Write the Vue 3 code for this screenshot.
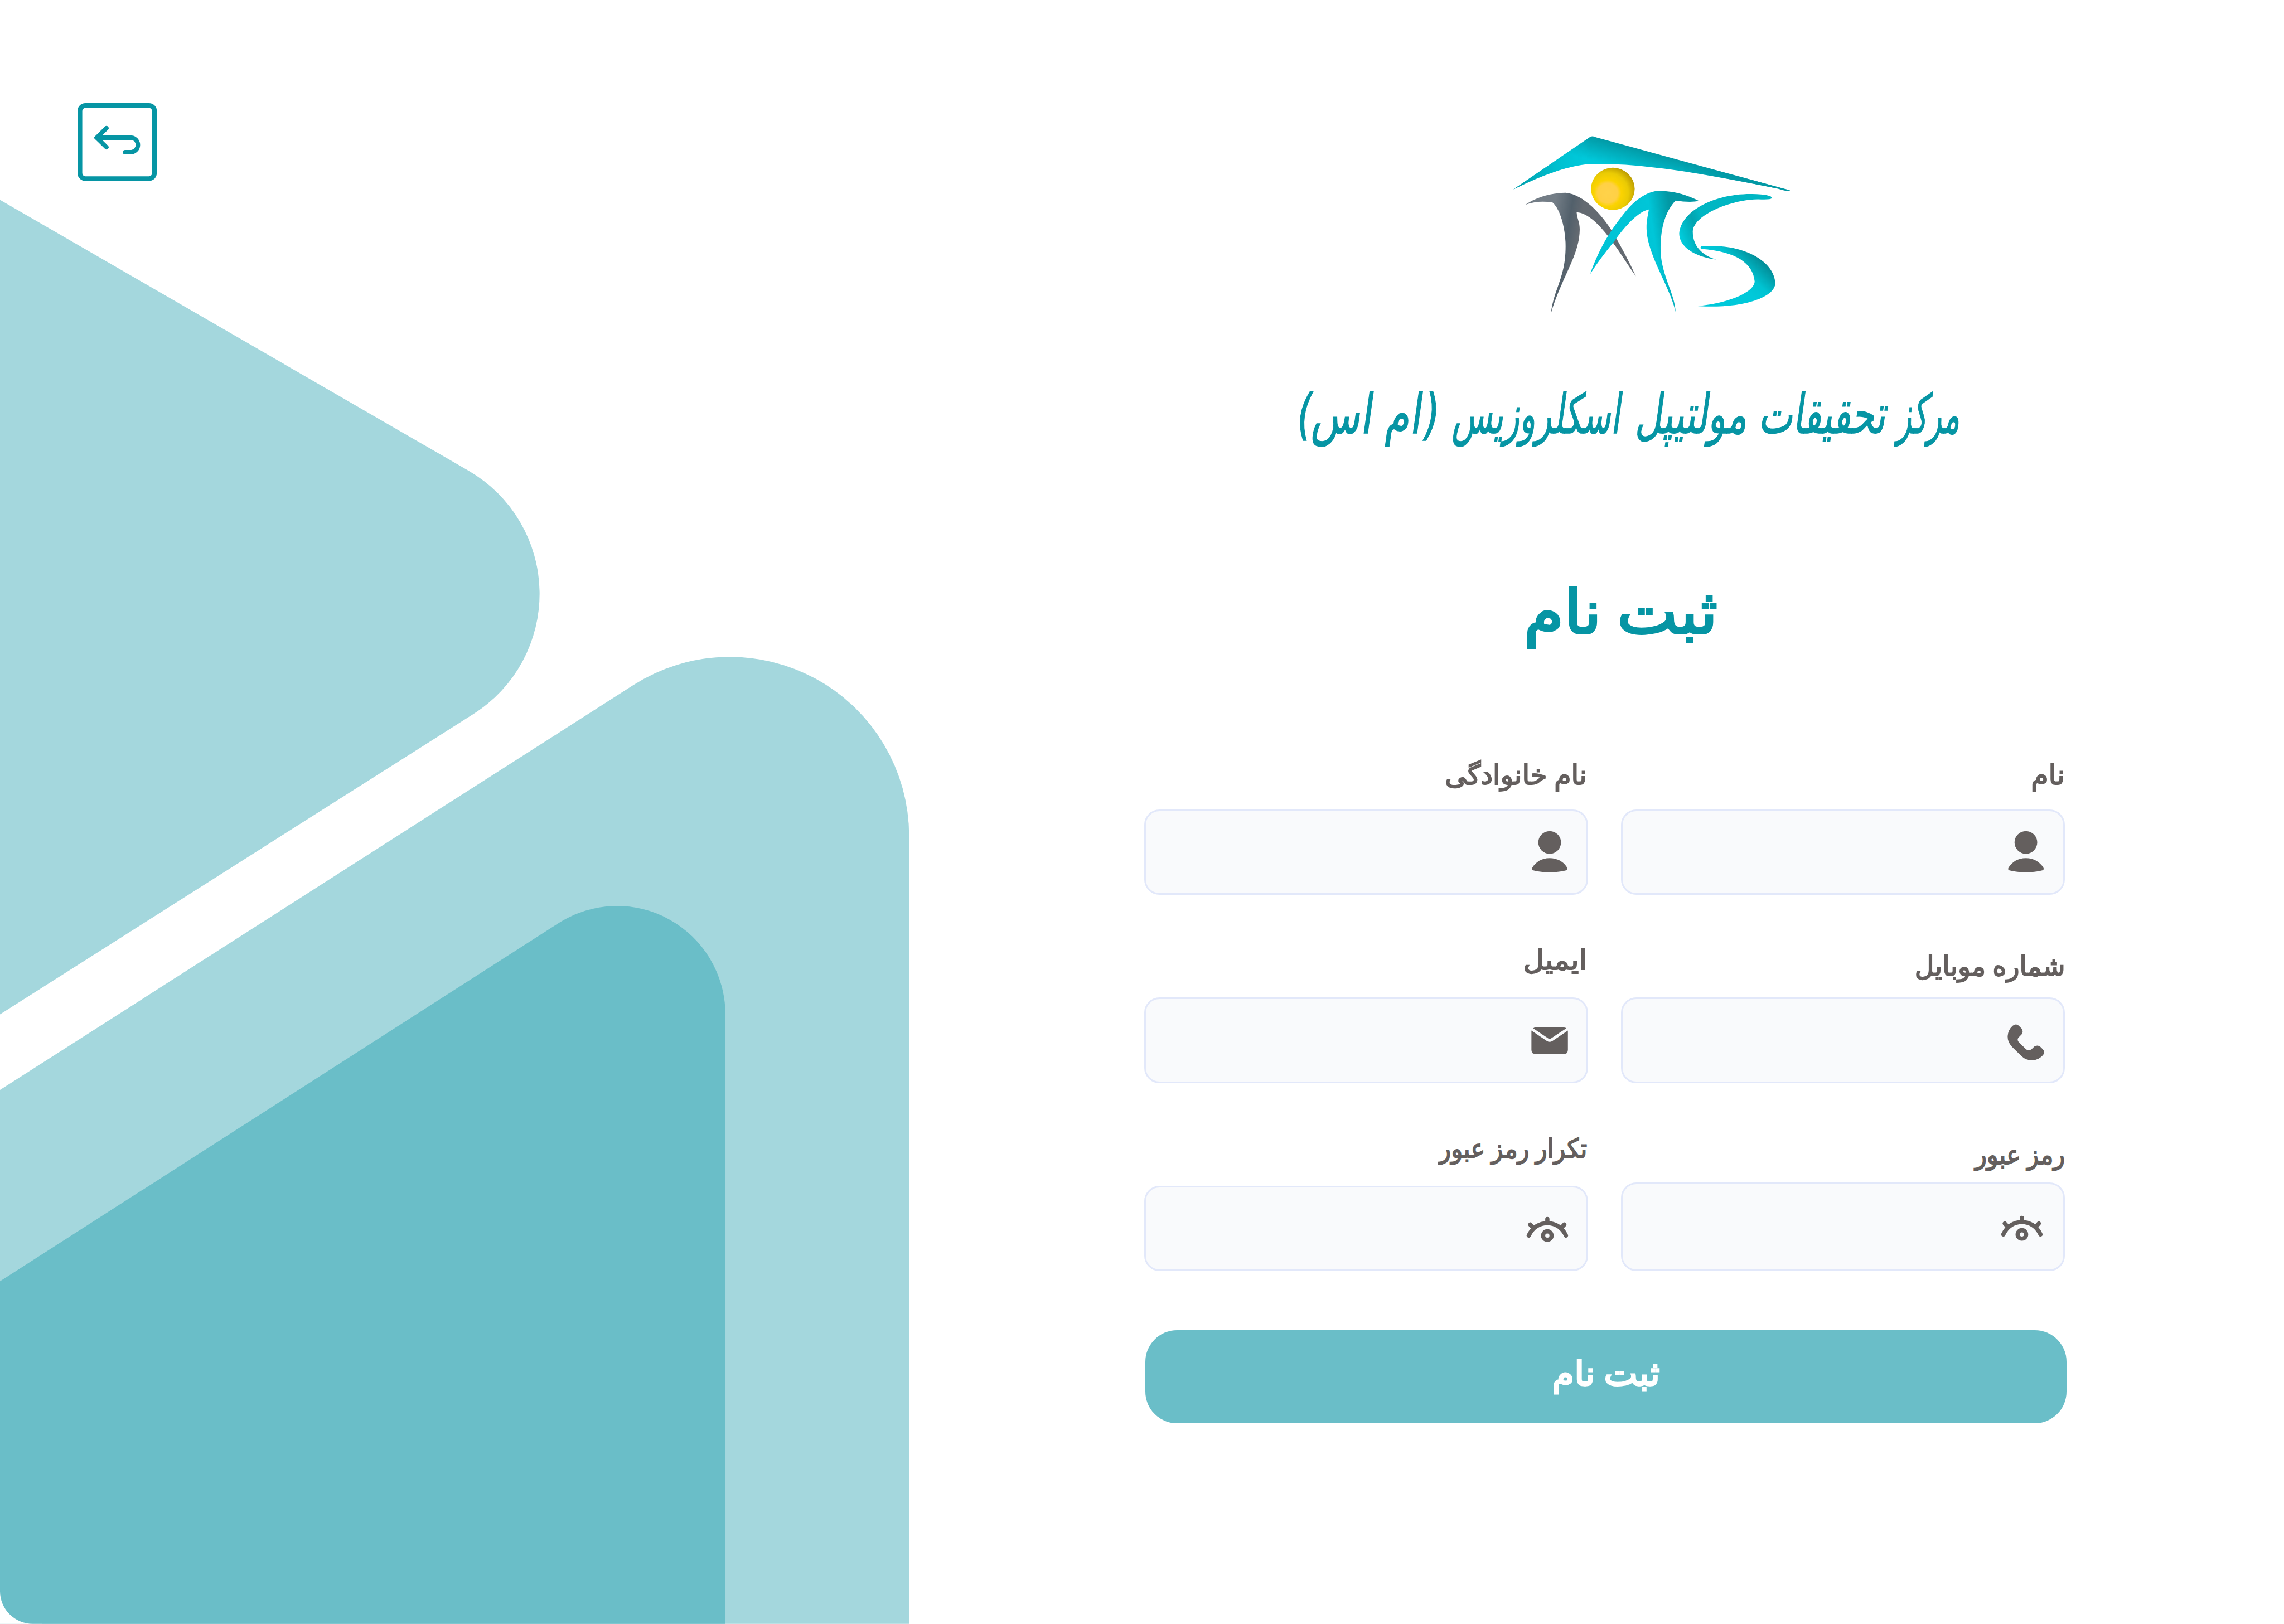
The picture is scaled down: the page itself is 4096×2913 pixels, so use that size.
<script setup>
import { nextTick } from 'vue'

// Stretches a line of text horizontally to the given width.
const vFit = {
  mounted(el, { value }) {
    nextTick(() => {
      el.style.transform = `scaleX(${value / el.offsetWidth})`
    })
  },
}

const columns = [
  {
    id: 'left',
    fields: [
      { id: 'last-name', label: 'نام خانوادگی', width: 269, icon: 'user' },
      { id: 'email', label: 'ایمیل', width: 121, icon: 'mail' },
      { id: 'repeat-password', label: 'تکرار رمز عبور', width: 280, icon: 'eye' },
    ],
  },
  {
    id: 'right',
    fields: [
      { id: 'first-name', label: 'نام', width: 64, icon: 'user' },
      { id: 'mobile', label: 'شماره موبایل', width: 284, icon: 'phone' },
      { id: 'password', label: 'رمز عبور', width: 170, icon: 'eye' },
    ],
  },
]

const boxes = {
  user: '637 447 240 252',
  mail: '637 438 240 252',
  phone: '637 447 240 252',
  eye: '624 490 240 252',
}

const words = [
  { text: 'مرکز', x: 3706, w: 118 },
  { text: 'تحقیقات', x: 3566, w: 240 },
  { text: 'مولتیپل', x: 3304, w: 212 },
  { text: 'اسکلروزیس', x: 3064, w: 318 },
  { text: '(ام اس)', x: 2717, w: 268 },
]
</script>

<template>
  <main class="page">
    <svg class="art" viewBox="0 0 1800 3072" aria-hidden="true">
      <path fill="#a4d7dd" d="M0 378 L887 891 A269 269 0 0 1 895 1351 L0 1919Z" />
      <path fill="#a4d7dd" d="M0 2062 L1198 1296 A339 339 0 0 1 1719.500 1581 V3072 H0Z" />
      <path fill="#fff" d="M0 2990 H80 V3072 H0Z" />
      <path fill="#6abec8" d="M0 2424 L1057 1746 A205 205 0 0 1 1372 1918 V3072 H62 A62 62 0 0 1 0 3010Z" />
    </svg>

    <aside class="side">
      <a class="back" href="#" aria-label="بازگشت">
        <svg viewBox="81 75 450 442" fill="none" stroke="#0695a4">
          <rect x="94.500" y="88.500" width="423" height="415" rx="31" stroke-width="27" />
          <path stroke-width="25" stroke-linecap="round" d="M245 217 L190 271 L245 325 M190 271 H387 A41.500 41.500 0 0 1 387 353.500 H351" />
        </svg>
      </a>
    </aside>

    <section class="panel">
      <svg class="logo" viewBox="0 0 1568 1140" preserveAspectRatio="none" aria-hidden="true">
        <defs>
          <linearGradient id="roof" gradientUnits="userSpaceOnUse" x1="640" y1="120" x2="600" y2="250">
            <stop offset="0" stop-color="#0298a4" /><stop offset="1" stop-color="#00c8da" />
          </linearGradient>
          <linearGradient id="roofEnds" gradientUnits="userSpaceOnUse" x1="110" y1="0" x2="1480" y2="0">
            <stop offset="0" stop-color="#0298a4" /><stop offset=".16" stop-color="#00bccb" stop-opacity=".7" />
            <stop offset=".28" stop-color="#00c8da" stop-opacity="0" />
            <stop offset=".6" stop-color="#0298a4" stop-opacity="0" /><stop offset=".85" stop-color="#0298a4" />
          </linearGradient>
          <radialGradient id="sun" cx=".38" cy=".6" r=".68">
            <stop offset="0" stop-color="#ffd24a" /><stop offset=".34" stop-color="#ffd045" />
            <stop offset=".46" stop-color="#fbd300" /><stop offset=".7" stop-color="#eacb04" /><stop offset="1" stop-color="#b59500" />
          </radialGradient>
          <linearGradient id="grey" gradientUnits="userSpaceOnUse" x1="310" y1="500" x2="450" y2="520">
            <stop offset="0" stop-color="#737d86" /><stop offset=".6" stop-color="#52606b" /><stop offset="1" stop-color="#646a71" />
          </linearGradient>
          <linearGradient id="tee" gradientUnits="userSpaceOnUse" x1="740" y1="560" x2="890" y2="540">
            <stop offset="0" stop-color="#00c4d6" /><stop offset=".35" stop-color="#00c6d8" /><stop offset="1" stop-color="#0298a4" />
          </linearGradient>
          <linearGradient id="essTop" gradientUnits="userSpaceOnUse" x1="930" y1="640" x2="1060" y2="600">
            <stop offset="0" stop-color="#00cddd" /><stop offset=".65" stop-color="#02a4b0" /><stop offset="1" stop-color="#00b6c3" />
          </linearGradient>
          <linearGradient id="essLow" gradientUnits="userSpaceOnUse" x1="1270" y1="960" x2="1390" y2="850">
            <stop offset="0" stop-color="#00c9da" /><stop offset=".4" stop-color="#00c3d2" /><stop offset="1" stop-color="#028f9a" />
          </linearGradient>
        </defs>
        <path fill="url(#roof)" d="M110 382 L490 84 Q503 77 518 86 L1478 388 Q1460 394 1420 378 Q1000 280 800 257 Q640 234 480 238 Q330 255 110 382Z" />
        <path fill="url(#roofEnds)" d="M110 382 L490 84 Q503 77 518 86 L1478 388 Q1460 394 1420 378 Q1000 280 800 257 Q640 234 480 238 Q330 255 110 382Z" />
        <ellipse cx="602" cy="379" rx="108" ry="120" fill="url(#sun)" />
        <path fill="url(#grey)" d="M168 470 Q250 405 368 401 C460 410 550 530 600 622 Q670 760 716 876 C670 800 625 715 580 650 C540 590 480 515 423 512 C425 550 440 570 438 615 C436 760 345 890 296 1085 C310 940 374 880 368 680 C362 560 330 480 303 456 Q230 442 168 470Z" />
        <path fill="url(#tee)" d="M490 862 C540 700 600 600 662 512 C710 440 780 385 840 390 Q940 395 1028 448 Q980 458 912 445 C860 510 836 600 838 740 C846 880 910 980 912 1078 C890 960 810 820 780 690 C760 600 770 560 780 496 C720 510 650 610 608 678 Q535 780 490 862Z" />
        <path fill="url(#essTop)" d="M1388 432 Q1380 442 1320 438 C1180 440 1000 530 997 620 C996 700 1040 755 1112 780 C1010 765 930 710 930 632 C940 500 1110 405 1290 408 Q1390 410 1388 432Z" />
        <path fill="url(#essLow)" d="M1040 706 C1230 685 1400 780 1405 915 C1400 1010 1200 1060 1022 1044 C1160 1030 1300 970 1303 905 C1295 800 1210 735 1040 720 Q1030 712 1040 706Z" />
      </svg>

      <svg class="wordmark" viewBox="2430 620 1300 310" role="img">
        <g transform="translate(0 818) skewX(-8)">
          <text v-for="w in words" :key="w.text" :x="w.x" y="0" :textLength="w.w" lengthAdjust="spacingAndGlyphs">{{ w.text }}</text>
        </g>
      </svg>

      <h1 class="title"><span v-fit="366">ثبت نام</span></h1>

      <form class="form" @submit.prevent>
        <div class="columns">
          <div v-for="col in columns" :key="col.id" class="column" :class="col.id">
            <div v-for="f in col.fields" :key="f.id" class="field" :class="[f.id, f.icon]">
              <label class="label"><span v-fit="f.width">{{ f.label }}</span></label>
              <div class="input">
                <svg class="icon" :viewBox="boxes[f.icon]" fill="#645f5e">
                  <template v-if="f.icon === 'user'">
                    <circle cx="757.500" cy="520" r="64.500" />
                    <path d="M658 665 C677 631 712 609 757.500 609 C803 609 838 631 858 665 Q860 675 853 678 Q805 690 757.500 690 Q710 690 662 678 Q655 675 658 665Z" />
                  </template>
                  <template v-else-if="f.icon === 'mail'">
                    <path d="M664 493 Q670 489 677 489 H838 Q846 489 852 493 L765 551 Q757.500 556 750 551Z" />
                    <path d="M654 506 L743 566 Q757.500 574 772 566 L861 506 V616 Q861 639 838 639 H677 Q654 639 654 616Z" />
                  </template>
                  <path
                    v-else-if="f.icon === 'phone'"
                    d="M682 479 Q700 464 716 477 L732 493 Q746 509 733 528 L716 545 Q706 556 716 570 L759 612 Q773 623 789 612 L806 596 Q823 585 839 597 L855 613 Q867 627 855 645 Q833 670 798 675 Q759 676 733 651 L679 598 Q653 570 654 538 Q656 503 682 479Z"
                  />
                  <g v-else fill="none" stroke="#645f5e" stroke-width="24" stroke-linecap="round">
                    <path d="M638.500 652 C660 605 700 581.500 744 581.500 S828 605 849.500 652" />
                    <path d="M744 558 V578 M647 590 L661 605 M840 590 L826 605" />
                    <circle cx="744" cy="652" r="24" />
                  </g>
                </svg>
              </div>
            </div>
          </div>
        </div>
        <button class="submit" type="submit"><span v-fit="204">ثبت نام</span></button>
      </form>
    </section>
  </main>
</template>

<style>
html,
body {
  margin: 0;
  background: #fff;
  overflow: hidden;
}
</style>

<style scoped>
.page {
  position: relative;
  display: flex;
  width: 4320px;
  height: 3072.500px;
  zoom: 0.948148;
  overflow: hidden;
  background: #fff;
  font-family: 'DejaVu Sans', sans-serif;
}
.art {
  position: absolute;
  left: 0;
  top: 0;
  width: 1800px;
  height: 3072px;
}
.side {
  position: relative;
  box-sizing: border-box;
  width: 2164px;
  padding: 195px 0 0 147px;
}
.back,
.back svg {
  display: block;
  width: 150px;
  height: 147.300px;
}
.panel {
  box-sizing: border-box;
  width: 1745px;
  padding-top: 231px;
}
.logo {
  display: block;
  width: 600px;
  height: 380px;
  margin-left: 656px;
}
.wordmark {
  display: block;
  width: 1300px;
  height: 310px;
  margin: 10px 0 0 266px;
  overflow: visible;
  direction: rtl;
  font-size: 104px;
  fill: #0695a4;
  stroke: #0695a4;
  stroke-width: 1.500px;
}
.title {
  display: flex;
  justify-content: center;
  height: 160px;
  margin: 148px 0 0 58px;
  line-height: 160px;
  font-size: 115px;
  font-weight: 400;
  color: #0695a4;
  direction: rtl;
  word-spacing: -9px;
  -webkit-text-stroke: 4px #0695a4;
}
.title span,
.submit span {
  display: inline-block;
  white-space: nowrap;
}
.form {
  margin-top: 181px;
}
.columns {
  display: flex;
  gap: 63px;
}
.column {
  width: 839.500px;
}
.field {
  display: flex;
  flex-direction: column;
}
.label {
  box-sizing: border-box;
  display: flex;
  align-items: flex-end;
  height: 194px;
  padding-bottom: 29.500px;
  direction: rtl;
  line-height: 80px;
  font-size: 51px;
  color: #645f5e;
  word-spacing: -3px;
  -webkit-text-stroke: 2px #645f5e;
}
.label span {
  display: inline-block;
  white-space: nowrap;
  transform-origin: right center;
}
.left .label {
  padding-right: 1.500px;
}
.first-name .label,
.last-name .label {
  height: 111px;
  padding-bottom: 23.500px;
}
.mobile .label {
  padding-bottom: 18px;
}
.password .label {
  height: 188px;
  padding-bottom: 12px;
}
.input {
  box-sizing: border-box;
  display: flex;
  justify-content: flex-end;
  height: 162px;
  padding: 35.500px 29px 0 0;
  border: 3.300px solid #e2e8fa;
  border-radius: 29px;
  background: #f9fafc;
}
.right .input {
  padding-right: 31px;
}
.email .input {
  padding-top: 36.500px;
}
.mobile .input {
  padding-top: 39.500px;
}
.repeat-password .input {
  padding: 37.500px 33.500px 0 0;
}
.password .input {
  height: 168px;
  padding: 41px 39px 0 0;
}
.icon {
  width: 80px;
  height: 84px;
}
.submit {
  display: flex;
  justify-content: center;
  box-sizing: border-box;
  width: 1743px;
  height: 176px;
  margin: 112px 0 0 2px;
  padding: 38px 0 0;
  border: 0;
  border-radius: 60px;
  background: #6abec8;
  color: #fff;
  font: 400 64px/90px 'DejaVu Sans', sans-serif;
  direction: rtl;
  word-spacing: -5px;
  -webkit-text-stroke: 3px #fff;
}
</style>
